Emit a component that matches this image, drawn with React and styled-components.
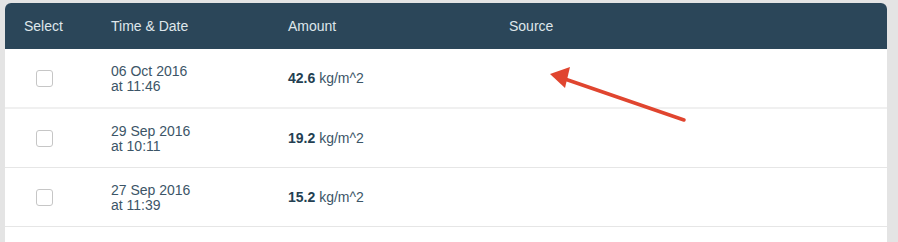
import styled, { createGlobalStyle } from 'styled-components';

const GlobalStyle = createGlobalStyle`
  html, body {
    margin: 0;
    padding: 0;
    background: #e4e4e4;
    overflow: hidden;
  }
  body {
    font-family: "Liberation Sans", Arial, sans-serif;
  }
`;

const Page = styled.div`
  position: relative;
  padding: 3px 11px 0 5px;
  height: 242px;
  box-sizing: border-box;
  overflow: hidden;
`;

const Panel = styled.div`
  background: #ffffff;
  border-radius: 6px 6px 0 0;
  overflow: hidden;
`;

const COLS = '106px 177px 221px 1fr';

const Header = styled.div`
  display: grid;
  grid-template-columns: ${COLS};
  align-items: center;
  height: 46px;
  background: #2b4659;
  color: #dfe6eb;
  font-size: 14px;
`;

const HeadCell = styled.div`
  padding-left: ${(p) => p.$pad || 0}px;
  margin-top: -1px;
`;

const Row = styled.div`
  display: grid;
  grid-template-columns: ${COLS};
  align-items: center;
  height: ${(p) => p.$h || 58}px;
  border-bottom: ${(p) => p.$thick ? '2px solid #f0f0f0' : '1px solid #e6e6e6'};
`;

const CheckCell = styled.div`
  padding-left: 31px;
  display: flex;
  align-items: center;
`;

const Check = styled.span`
  display: block;
  width: 15px;
  height: 15px;
  border: 1.5px solid #c6c6c6;
  border-radius: 3px;
  background: #fff;
`;

const DateText = styled.div`
  font-size: 14px;
  line-height: 15px;
  color: #3c5567;
  margin-top: 2px;
`;

const Amount = styled.div`
  font-size: 14px;
  color: #3c5567;
  b {
    font-weight: bold;
    color: #243f52;
  }
`;

const Arrow = styled.svg`
  position: absolute;
  left: 0;
  top: 0;
  pointer-events: none;
`;

const rows = [
  { date: '06 Oct 2016', time: '11:46', val: '42.6' },
  { date: '29 Sep 2016', time: '10:11', val: '19.2' },
  { date: '27 Sep 2016', time: '11:39', val: '15.2' },
];

const App = () => {
  return (
    <>
      <GlobalStyle />
      <Page>
        <Panel>
          <Header>
            <HeadCell $pad={19}>Select</HeadCell>
            <HeadCell>Time &amp; Date</HeadCell>
            <HeadCell>Amount</HeadCell>
            <HeadCell>Source</HeadCell>
          </Header>
          {rows.map((r, i) => (
            <Row key={r.date} $thick={i === 0}>
              <CheckCell><Check /></CheckCell>
              <DateText>{r.date}<br />at {r.time}</DateText>
              <Amount><b>{r.val}</b> kg/m^2</Amount>
              <div />
            </Row>
          ))}
          <Row $h={60} />
        </Panel>
        {/* red annotation arrow */}
        <Arrow width="898" height="242" viewBox="0 0 898 242">
          <line x1="684" y1="120" x2="562" y2="78" stroke="#e0452f" strokeWidth="3.5" strokeLinecap="round" />
          <polygon points="550,74 570,67 565,88" fill="#e0452f" />
        </Arrow>
      </Page>
    </>
  );
};

export default App;
